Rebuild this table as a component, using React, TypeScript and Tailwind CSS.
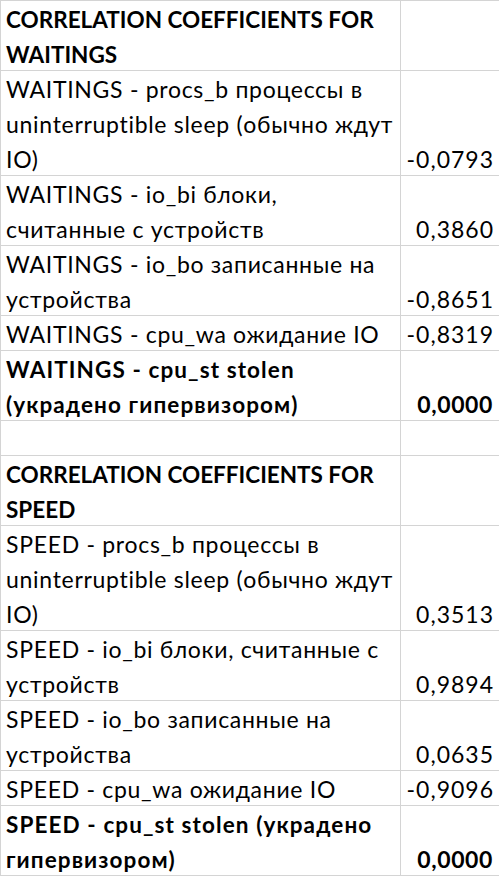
import { FC, ReactNode } from "react";

type Row = {
  lines: string[];
  value?: string;
  bold?: boolean;
  head?: boolean;
};

const rows: Row[] = [
  { lines: ["CORRELATION COEFFICIENTS FOR", "WAITINGS"], bold: true, head: true },
  {
    lines: [
      "WAITINGS - procs_b процессы в",
      "uninterruptible sleep (обычно ждут",
      "IO)",
    ],
    value: "-0,0793",
  },
  { lines: ["WAITINGS - io_bi блоки,", "считанные с устройств"], value: "0,3860" },
  { lines: ["WAITINGS - io_bo записанные на", "устройства"], value: "-0,8651" },
  { lines: ["WAITINGS - cpu_wa ожидание IO"], value: "-0,8319" },
  {
    lines: ["WAITINGS - cpu_st stolen", "(украдено гипервизором)"],
    value: "0,0000",
    bold: true,
  },
  { lines: [""] },
  { lines: ["CORRELATION COEFFICIENTS FOR", "SPEED"], bold: true, head: true },
  {
    lines: [
      "SPEED - procs_b процессы в",
      "uninterruptible sleep (обычно ждут",
      "IO)",
    ],
    value: "0,3513",
  },
  { lines: ["SPEED - io_bi блоки, считанные с", "устройств"], value: "0,9894" },
  { lines: ["SPEED - io_bo записанные на", "устройства"], value: "0,0635" },
  { lines: ["SPEED - cpu_wa ожидание IO"], value: "-0,9096" },
  {
    lines: ["SPEED - cpu_st stolen (украдено", "гипервизором)"],
    value: "0,0000",
    bold: true,
  },
];

const Cell: FC<{ children?: ReactNode; className?: string }> = ({
  children,
  className = "",
}) => (
  <div className={`flex flex-col justify-end whitespace-nowrap ${className}`}>
    {children}
  </div>
);

const App: FC = () => {
  return (
    <div className="w-[499px] h-[876px] bg-white overflow-hidden font-['Lato',sans-serif] leading-[37px] text-black [font-variant-ligatures:none]">
      <div className="border-t border-l border-[#d4d4d4]">
        {rows.map((row, i) => (
          <div
            key={i}
            className="grid grid-cols-[400px_98px] border-b border-[#d4d4d4]"
            style={{ height: row.lines.length * 35 }}
          >
            <Cell
              className={`pl-[5px] border-r border-[#d4d4d4] ${
                row.head
                  ? "font-bold text-[22.5px]"
                  : row.bold
                  ? "font-bold text-[22.5px] tracking-[1.1px]"
                  : "text-[23px] tracking-[0.7px]"
              }`}
            >
              {row.lines.map((l, j) => (
                <span key={j} className="block h-[35px]">
                  {l}
                </span>
              ))}
            </Cell>
            <Cell
              className={`items-end text-[23px] ${
                row.bold
                  ? "font-bold tracking-[0.6px] pr-[6px]"
                  : "tracking-[1px] pr-[5px]"
              }`}
            >
              <span className="block h-[35px]">{row.value}</span>
            </Cell>
          </div>
        ))}
      </div>
    </div>
  );
};

export default App;
